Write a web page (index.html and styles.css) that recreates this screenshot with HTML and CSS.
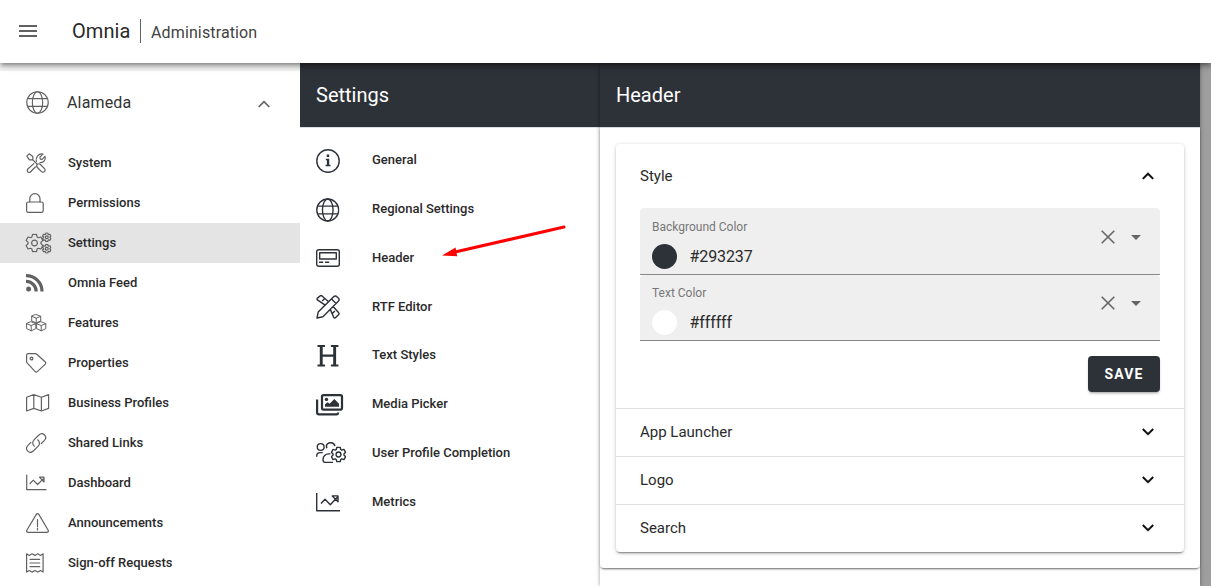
FILE: index.html
```html
<!DOCTYPE html>
<html lang="en">
<head>
<meta charset="utf-8">
<title>Omnia Administration</title>
<link rel="stylesheet" href="styles.css">
</head>
<body>
<svg class="defs" width="0" height="0">
  <symbol id="gear" viewBox="-9.5 -9.5 19 19"><path vector-effect="non-scaling-stroke" d="M-1.98-8.57H1.98L2.64-5.94 3.82-5.26 6.44-6 8.42-2.57 6.46-.68V.68L8.42 2.57 6.44 6 3.82 5.26 2.64 5.94 1.98 8.57H-1.98L-2.64 5.94-3.82 5.26-6.44 6-8.42 2.57-6.46.68V-.68L-8.42-2.57-6.44-6-3.82-5.26-2.64-5.94Z"/><circle r="2.9" vector-effect="non-scaling-stroke"/></symbol>
  <symbol id="globe" viewBox="0 0 24 24"><circle cx="12" cy="12" r="11.2"/><ellipse cx="12" cy="12" rx="5.4" ry="11.2"/><path d="M1.5 8h21M1.5 16h21"/></symbol>
</svg>

<header class="topbar">
  <svg class="burger" width="18" height="12"><path d="M0 1h18M0 6h18M0 11h18"/></svg>
  <span class="brand">Omnia</span>
  <span class="section">Administration</span>
</header>

<main class="layout">
  <nav class="sidebar">
    <div class="tenant">
      <svg class="line" width="23" height="23"><use href="#globe"/></svg>
      <span class="tenant-name">Alameda</span>
      <svg class="caret" width="12" height="8" viewBox="0 0 12 8"><path d="M.7 7 6 1.7 11.3 7"/></svg>
    </div>
    <ul class="menu">
      <li><span class="ico"><svg class="line" width="20" height="20"><path d="M.8 3.2 3.2.8 6.8 3.4V6.8H3.4ZM6.8 6.8 11 11M11.4 11.2c1-.6 2.2-.5 3 .3L18.5 15.600a2.100 2.100 0 0 1-3 3L11.400 14.500c-.8-.8-.9-2.200 0-3.300ZM7.800 10.600 1.600 16.200a2 2 0 0 0 2.800 2.800L9.300 14M10.300 8.500C9.300 4.500 12.600.1 17 1.100L13.900 4.200 14.300 6.100 16.100 6.400 19.100 3.400C19.900 6.900 17.700 9.900 14 9.500"/></svg></span>System</li>
      <li><span class="ico"><svg class="line" width="18" height="20"><rect x=".6" y="9" width="16.600" height="10.300" rx="1.600"/><path d="M3.800 9V5.800a5.100 5.100 0 0 1 10.200 0V9"/></svg></span>Permissions</li>
      <li class="active"><span class="ico"><svg class="line" width="26" height="20"><use href="#gear" x="-1" y=".5" width="19" height="19"/><use href="#gear" x="16" y="-.5" width="9.500" height="9.500"/><use href="#gear" x="16" y="11" width="9.500" height="9.500"/></svg></span>Settings</li>
      <li><span class="ico"><svg class="feed" width="18" height="18"><circle cx="2.600" cy="15" r="2.500"/><path d="M0 7.400A10.100 10.100 0 0 1 10.200 17.500M0 1.600A15.900 15.900 0 0 1 16 17.500"/></svg></span>Omnia Feed</li>
      <li><span class="ico"><svg class="line thin" width="21" height="18"><path d="M10.200.6 14.700 2.300V7L10.200 8.900 5.700 7V2.300ZM5.700 2.300 10.200 4.200 14.700 2.300M10.200 4.200V8.900M5.200 7.800 9.800 9.700V14.600L5.200 16.800.6 14.600V9.700ZM.6 9.700 5.200 11.500 9.800 9.700M5.200 11.500V16.800M15.200 7.800 19.800 9.700V14.600L15.200 16.800 10.600 14.600V9.700ZM10.600 9.700 15.200 11.500 19.800 9.700M15.200 11.500V16.800"/></svg></span>Features</li>
      <li><span class="ico"><svg class="line" width="21" height="20"><path d="M.6 2.200V8.400c0 .7.2 1.200.7 1.700L9.200 18.600c.6.7 1.500.7 2.100 0L19.300 11.100c.6-.6.600-1.500 0-2.100L10.800 1.300C10.300.8 9.900.6 9.200.6H2.200C1.300.6.6 1.300.6 2.200Z"/><circle cx="5.500" cy="5.500" r="1.400"/></svg></span>Properties</li>
      <li><span class="ico"><svg class="line" width="24" height="18"><path d="M.6 3.200 7.800.6 15.400 3.200 22.600.6V14.400L15.400 17 7.800 14.400.6 17ZM7.800.6V14.400M15.400 3.200V17"/></svg></span>Business Profiles</li>
      <li><span class="ico"><svg class="line" width="21" height="20"><path d="M8.300 13.100C6.300 11.300 6.200 8.700 8 6.900L12.900 2C16.800-1.500 22 3.600 18.500 7.300L15.300 10.500M11.700 6.800C13.900 8.700 14 11.300 12.200 13.100L7.300 18C3.300 21.500-1.700 16.500 1.700 12.600L4.900 9.400"/></svg></span>Shared Links</li>
      <li><span class="ico"><svg class="line" width="21" height="16"><path d="M.7 0V14.700H20M4 8.500 7.300 5.200 11.600 9.500 17.800 3.400M13.500 2.200H18V7Z"/></svg></span>Dashboard</li>
      <li><span class="ico"><svg class="line" width="24" height="20"><path d="M10.300 1.400C10.900.4 12.200.4 12.800 1.400L22.200 17.200C22.900 18.300 22.100 19.300 20.900 19.300H2C.8 19.300.2 18.300.8 17.200Z"/><path d="M11.500 6.500V13.500M11.500 15V17"/></svg></span>Announcements</li>
      <li><span class="ico"><svg class="line" width="18" height="20"><path d="M.6.8 3.200 2.400 6 .8 8.900 2.400 11.700.8 14.500 2.400 17.100.8V19.100L14.500 17.500 11.700 19.100 8.900 17.500 6 19.100 3.200 17.500.6 19.100ZM4 6.300H13.700M4 10H13.700M4 13.700H13.700"/></svg></span>Sign-off Requests</li>
    </ul>
  </nav>

  <section class="panel">
    <h2 class="panel-title">Settings</h2>
    <ul class="options">
      <li><span class="ico"><svg class="dark" width="24" height="24"><circle cx="12" cy="12" r="11.200"/><path class="solid" d="M10.700 5.600h2.500V8h-2.500ZM9.800 9.700H13.200V15.800H14.500V17.300H9.600V15.800H10.900V11.200H9.800Z"/></svg></span>General</li>
      <li><span class="ico"><svg class="dark" width="23.500" height="24"><use href="#globe"/></svg></span>Regional Settings</li>
      <li><span class="ico"><svg class="dark" width="24" height="18"><rect x=".7" y=".7" width="22.600" height="16.600" rx="2"/><rect x="3.700" y="3.700" width="16.600" height="6.300"/><path d="M3 13.300H7.200M9 13.300H13.200"/></svg></span>Header</li>
      <li><span class="ico"><svg class="dark" width="25" height="24"><path d="M1 23 2.200 17.100 17.600 1.700C18.700.7 20 .7 20.900 1.700L22.300 3.100C23.300 4.100 23.300 5.300 22.300 6.300L6.900 21.800ZM15.500 3.900 20.100 8.500M9.200 10.200 1.400 4.900C.8 4.300.8 3.700 1.400 3.100L4.200.9C4.800.4 5.400.4 6 .9L12.600 6.800M6.200 6 8.300 3.900M14.300 14.400 17.800 22.500C18.500 23.200 19.100 23.200 19.700 22.500L22.700 19.500C23.300 18.900 23.300 18.300 22.700 17.700L17.100 11.500M16.500 18.200 18.900 15.900"/></svg></span>RTF Editor</li>
      <li><span class="ico"><svg class="solid" width="24" height="22"><path d="M1.500 0H9V2.100H6.700V9.400H17.200V2.100H14.900V0H22.400V2.100H20.100V19.400H22.400V21.500H14.900V19.400H17.200V11.800H6.700V19.400H9V21.500H1.500V19.400H3.800V2.100H1.500Z"/></svg></span>Text Styles</li>
      <li><span class="ico"><svg class="dark heavy" width="28" height="22"><rect x="6" y="1.200" width="20" height="14.400" rx="1.500"/><path d="M1.100 5.500V18.500C1.100 19.800 1.900 20.400 3 20.400H20.500C21.600 20.400 22.100 19.800 22.100 18.500"/><circle class="solid" cx="10.500" cy="5.400" r="1.700"/><path class="solid" d="M9 12.700V10.300L11.600 8.300 13.700 9.800 18.300 5 23 9.800V12.700Z"/></svg></span>Media Picker</li>
      <li><span class="ico"><svg class="dark" width="31" height="22"><circle cx="4.700" cy="5" r="3.400"/><path d="M.7 14.800C.5 11.800 2 10.600 4 10.600H6.700M10.900 6.300C9 2 13 .3 15.600.8 17.300 1.100 18.500 2.300 18.900 4.100M14.500 11.900H12.500C9.500 11.900 7 14.500 7 17.500 7 19.700 7.600 20.400 9.100 20.400H17"/><use href="#gear" x="14.500" y="4.500" width="16" height="16"/></svg></span>User Profile Completion</li>
      <li><span class="ico"><svg class="dark" width="25" height="19"><path d="M.7 0V17.700H24M5 10.500 9 6.300 14.300 11.700 21.500 4M16.300 2.900H22V8.700Z"/></svg></span>Metrics</li>
    </ul>
  </section>

  <section class="editor">
    <h2 class="panel-title">Header</h2>
    <div class="sheet">
      <div class="accordion">
        <div class="group open">
          <div class="group-head">Style<svg class="chev" width="12" height="8"><path d="M.8 6.900 6 1.700 11.200 6.900"/></svg></div>
          <div class="fields">
            <div class="field first">
              <div class="field-text"><div class="label">Background Color</div><div class="value"><i class="swatch navy"></i>#293237</div></div>
              <svg class="clear" width="14" height="14"><path d="M.7.7 13.300 13.300M13.300.7.7 13.300"/></svg><svg class="drop" width="10" height="5"><path d="M0 0H10L5 5Z"/></svg>
            </div>
            <div class="field">
              <div class="field-text"><div class="label">Text Color</div><div class="value"><i class="swatch"></i>#ffffff</div></div>
              <svg class="clear" width="14" height="14"><path d="M.7.7 13.300 13.300M13.300.7.7 13.300"/></svg><svg class="drop" width="10" height="5"><path d="M0 0H10L5 5Z"/></svg>
            </div>
            <button class="save">SAVE</button>
          </div>
        </div>
        <div class="group">App Launcher<svg class="chev" width="12" height="8"><path d="M.8 1 6 6.200 11.200 1"/></svg></div>
        <div class="group">Logo<svg class="chev" width="12" height="8"><path d="M.8 1 6 6.200 11.200 1"/></svg></div>
        <div class="group">Search<svg class="chev" width="12" height="8"><path d="M.8 1 6 6.200 11.200 1"/></svg></div>
      </div>
    </div>
  </section>
</main>

<svg class="pointer" width="126" height="34"><path class="shaft" d="M123 3 14 28"/><path class="tip" d="M1 31.500 14.500 23.500 16.200 32.300Z"/></svg>
</body>
</html>
```
FILE: styles.css
```css
* { box-sizing: border-box; }
body { margin: 0; height: 586px; overflow: hidden; font-family: Roboto, sans-serif; background: #9e9e9e; color: #2a2a2a; position: relative; }
svg { display: block; flex: none; fill: none; overflow: visible; }
.defs { position: absolute; }
ul { list-style: none; margin: 0; padding: 0; }

.topbar { position: relative; z-index: 3; height: 63px; background: #fff; display: flex; align-items: center; padding: 0 0 2px 19px; box-shadow: 0 2px 4px -1px rgba(0,0,0,.3), 0 4px 5px rgba(0,0,0,.2), 0 1px 10px rgba(0,0,0,.14); }
.burger { stroke: #616161; stroke-width: 2; }
.brand { font-size: 20px; letter-spacing: .05px; line-height: 24px; width: 69px; margin-left: 35px; padding-right: 10px; border-right: 1px solid #616161; }
.section { font-size: 16px; letter-spacing: .13px; margin-left: 10px; padding-top: 3px; color: #424242; }

.layout { display: grid; grid-template-columns: 300px 300px 600px; height: 523px; }
.sidebar { background: #fff; border-top: 8px solid #f5f5f5; }
.tenant { height: 64px; display: flex; align-items: center; padding: 0 30px 2px 26px; font-size: 16px; color: #333; }
.tenant-name { flex: 1; margin-left: 18px; letter-spacing: .15px; }
.line { stroke: #616161; stroke-width: 1.2; stroke-linejoin: round; stroke-linecap: round; }
.thin { stroke-width: 1; }
.caret { stroke: #616161; stroke-width: 1.7; margin-top: 3px; }
.menu { padding-top: 8px; }
.menu li { height: 40px; display: flex; align-items: center; padding: 0 0 2px 26px; font-size: 13px; font-weight: 500; }
.menu .ico { width: 42px; padding-top: 2px; }
.menu .active { background: #e4e4e4; }
.feed { stroke: #616161; stroke-width: 3.2; }
.feed circle { fill: #616161; stroke: none; }

.panel-title { margin: 0; height: 65px; background: #2d3138; border-bottom: 1px solid #dcdde0; color: #fff; font-size: 20px; font-weight: 400; line-height: 64px; padding-left: 16px; }
.panel { background: #fff; }
.options { padding-top: 8px; }
.options li { height: 48.75px; display: flex; align-items: center; padding: 0 0 1px 16px; font-size: 13px; font-weight: 500; }
.options .ico { width: 56px; padding-top: 2px; }
.dark { stroke: #2d3138; stroke-width: 1.4; stroke-linejoin: round; }
.heavy { stroke-width: 2.200; }
.solid { fill: #2d3138; stroke: none; }

.editor { background: #fff; box-shadow: 0 0 4px rgba(0,0,0,.4); }
.sheet { height: 440px; padding: 16px; border-radius: 0 0 4px 4px; background: #fff; box-shadow: 0 2px 2px -1px rgba(0,0,0,.5), 0 1px 3px rgba(0,0,0,.15); }
.accordion { border-radius: 4px; box-shadow: 0 2px 2px -1px rgba(0,0,0,.45), 0 1px 4px rgba(0,0,0,.2); font-size: 15px; }
.group { height: 48px; display: flex; align-items: center; justify-content: space-between; padding: 0 30px 2px 24px; border-top: 1px solid #e0e0e0; }
.open { height: 264px; display: block; border: 0; padding: 0; }
.group-head { height: 64px; display: flex; align-items: center; justify-content: space-between; padding: 0 30px 0 24px; }
.chev { stroke: #111; stroke-width: 2; }
.fields { padding: 0 24px; }
.field { height: 66px; display: flex; align-items: flex-start; padding: 0 19px 0 12px; background: #efefef; border-bottom: 1px solid #888; border-radius: 4px 4px 0 0; }
.first { height: 67px; padding-top: 0; }
.field-text { flex: 1; padding-top: 10px; }
.first .field-text { padding-top: 11px; }
.label { font-size: 12px; line-height: 16px; color: #777; }
.value { display: flex; align-items: center; gap: 12.500px; font-size: 16px; letter-spacing: -.1px; line-height: 25px; margin-top: 9px; }
.swatch { width: 25px; height: 25px; border-radius: 50%; background: #fff; }
.navy { background: #2d3138; }
.clear { stroke: #666; stroke-width: 1.600; margin: 21px 16px 0 0; }
.drop { fill: #666; margin-top: 26px; }
.first .clear { margin-top: 22px; }
.first .drop { margin-top: 27px; }
.save { display: block; width: 72px; height: 36px; margin: 15px 0 0 auto; border: 0; border-radius: 4px; background: #2d3138; color: #fff; font: 700 14px Roboto, sans-serif; letter-spacing: 1.100px; padding: 0; box-shadow: 0 2px 3px -1px rgba(0,0,0,.4); }

.pointer { position: absolute; left: 441px; top: 224px; z-index: 4; }
.shaft { stroke: #f00; stroke-width: 3; stroke-linecap: round; }
.tip { fill: #f00; }
```
